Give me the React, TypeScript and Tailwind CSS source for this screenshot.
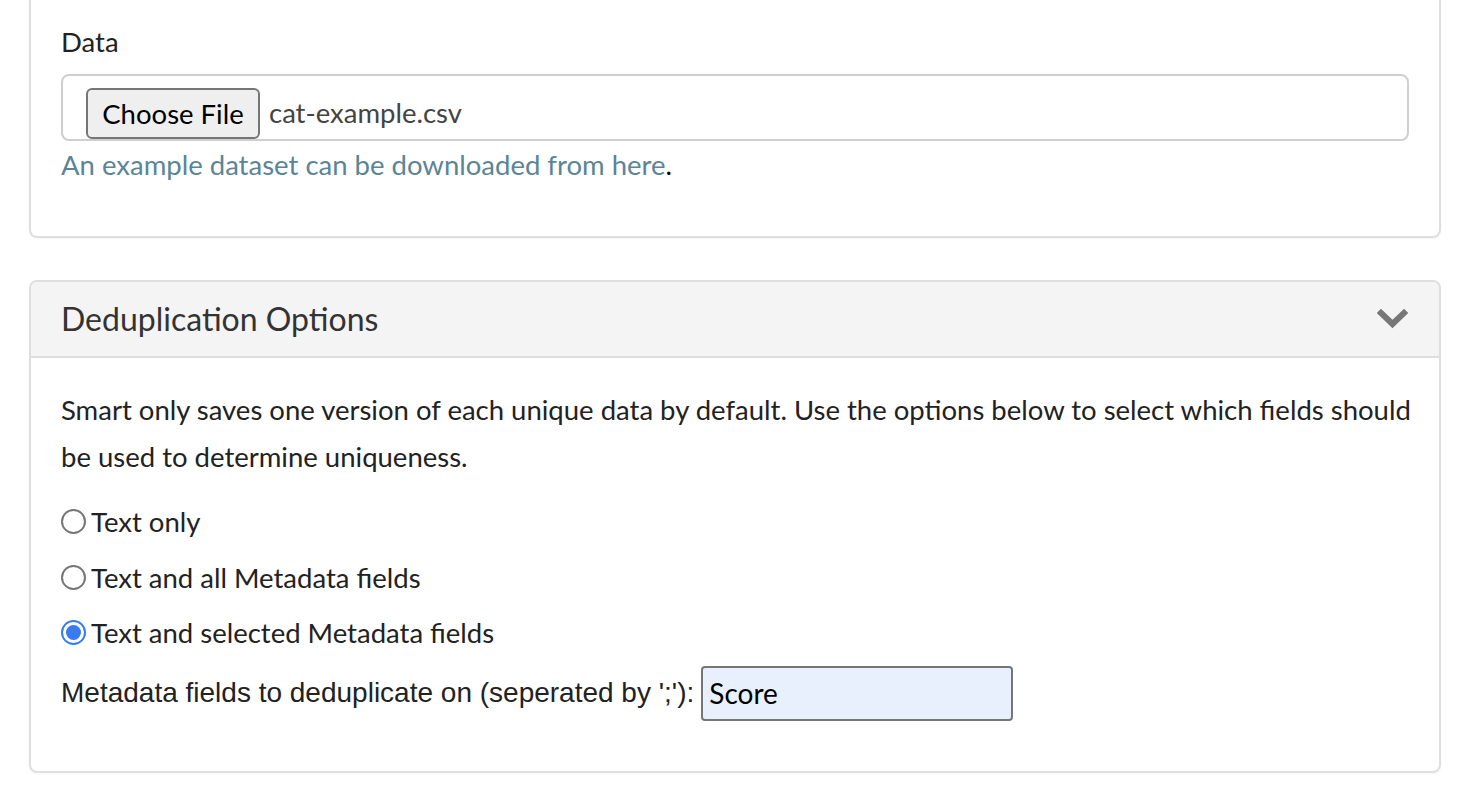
import React from "react";

const lato = { fontFamily: "Lato, 'Open Sans', sans-serif" };

const Radio = ({ checked, label }: { checked?: boolean; label: string }) => (
  <label className="flex h-[55.5px] items-center gap-[5px] text-[27.5px] text-[#222]">
    {checked ? (
      <span className="flex h-[25px] w-[25px] items-center justify-center rounded-full border-2 border-[#3a7bf0] bg-white">
        <span className="h-[15px] w-[15px] rounded-full bg-[#3a7bf0]" />
      </span>
    ) : (
      <span className="h-[25px] w-[25px] rounded-full border-2 border-[#767676] bg-white" />
    )}
    <span>{label}</span>
  </label>
);

export default function App() {
  return (
    <div className="min-h-screen bg-white px-[29px] text-[#222]" style={lato}>
      {/* Data card (top is scrolled off) */}
      <div className="rounded-b-[8px] border-x-2 border-b-2 border-[#dedede] px-[30px] pb-[56px] pt-[24px] shadow-[0_1px_2px_rgba(0,0,0,0.04)]">
        <div className="text-[27.5px] leading-[36px]">Data</div>
        <div className="mt-[14px] flex h-[67px] items-start gap-[9px] rounded-[8px] border-2 border-[#cfcfcf] pl-[23px] pt-[12px]">
          <button className="h-[51px] w-[174px] rounded-[6px] border-2 border-[#767676] bg-[#efefef] text-[27.5px] text-black">
            Choose File
          </button>
          <span className="pt-[8px] text-[27.5px] leading-[34px] text-[#444]">cat-example.csv</span>
        </div>
        <div className="mt-[9px] text-[27.5px] leading-[30px]">
          <a className="text-[#5b8597]">An example dataset can be downloaded from here</a>
          <span className="text-black">.</span>
        </div>
      </div>

      {/* Deduplication card */}
      <div className="mt-[42px] overflow-hidden rounded-[8px] border-2 border-[#dedede] shadow-[0_1px_2px_rgba(0,0,0,0.04)]">
        <div className="flex h-[76px] items-center justify-between border-b-2 border-[#dedede] bg-[#f4f4f4] pl-[30px] pr-[31px]">
          <span className="text-[32px] text-[#333]">Deduplication Options</span>
          <svg width="31" height="20" viewBox="0 0 31 20">
            <polyline points="4,4 15.5,15 27,4" fill="none" stroke="#777" strokeWidth="6" strokeLinecap="square" strokeLinejoin="miter" />
          </svg>
        </div>
        <div className="px-[30px] pb-[50px] pt-[28px]">
          <p className="mr-[-12px] text-[27.5px] leading-[47px] text-[#222]">
            Smart only saves one version of each unique data by default. Use the options below to select which fields should be used to determine uniqueness.
          </p>
          <div className="mt-[14px] flex flex-col">
            <Radio label="Text only" />
            <Radio label="Text and all Metadata fields" />
            <Radio checked label="Text and selected Metadata fields" />
          </div>
          <div className="mt-[5px] flex items-center gap-[7px]">
            <span className="text-[28px] text-[#222]" style={{ fontFamily: "'Liberation Sans', Arial, sans-serif" }}>
              Metadata fields to deduplicate on (seperated by ';'):
            </span>
            <input
              readOnly
              value="Score"
              className="h-[55px] w-[312px] rounded-[4px] border-2 border-[#767676] bg-[#e8f0fe] px-[6px] text-[28px] text-black outline-none"
            />
          </div>
        </div>
      </div>
    </div>
  );
}
